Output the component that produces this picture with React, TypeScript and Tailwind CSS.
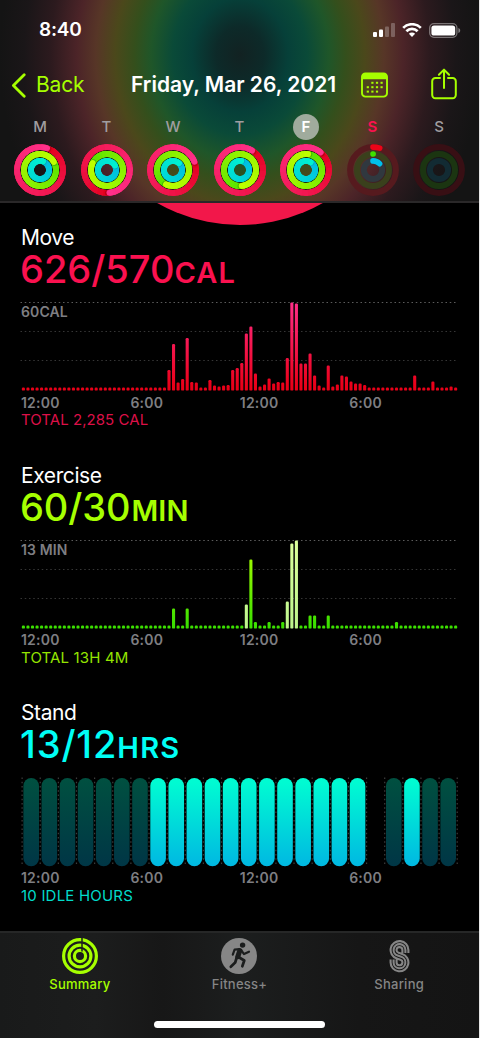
import type { ReactNode } from "react";

type RGB = [number, number, number];

const RING_COLORS: { from: RGB; to: RGB; radius: number }[] = [
  { from: [228, 0, 28], to: [255, 48, 138], radius: 22.9 },
  { from: [84, 226, 0], to: [190, 255, 0], radius: 16 },
  { from: [0, 184, 226], to: [0, 240, 208], radius: 9.1 },
];

const polar = (r: number, deg: number) => {
  const a = ((deg - 90) * Math.PI) / 180;
  return [26 + r * Math.cos(a), 26 + r * Math.sin(a)];
};

const arc = (r: number, start: number, end: number) => {
  const [x1, y1] = polar(r, start);
  const [x2, y2] = polar(r, end);
  return `M${x1} ${y1}A${r} ${r} 0 0 1 ${x2} ${y2}`;
};

const mix = (a: RGB, b: RGB, t: number) =>
  `rgb(${a.map((v, i) => Math.round(v + (b[i] - v) * t)).join(",")})`;

type Day = {
  label: string;
  // angle where each closed ring ends: move, exercise, stand
  ends?: number[];
  tracks?: string[];
  partial?: boolean;
};

const DAYS: Day[] = [
  { label: "M", ends: [18, 60, 20] },
  { label: "T", ends: [174, 296, 62] },
  { label: "W", ends: [69, 206, 42] },
  { label: "T", ends: [32, 174, 8] },
  { label: "F", ends: [40, 8, 32] },
  { label: "S", tracks: ["#561a1e", "#3a401c", "#30383f"], partial: true },
  { label: "S", tracks: ["#380f14", "#1b3511", "#122b33"] },
];

const Rings = ({ day }: { day: Day }) => (
  <svg width="52" height="52" viewBox="0 0 52 52" fill="none">
    {day.ends && <circle cx="26" cy="26" r="16" stroke="#101a10" strokeOpacity="0.85" strokeWidth="18" />}
    {day.tracks?.map((color, i) => (
      <circle key={color} cx="26" cy="26" r={RING_COLORS[i].radius} stroke={color} strokeWidth="6" />
    ))}
    {day.partial && (
      <g strokeWidth="5.6" strokeLinecap="round">
        <path d={arc(22.9, 0, 17)} stroke="#ec0418" />
        <path d={arc(16, 0, 0.5)} stroke="#3fe000" />
        <path d={arc(9.1, 0, 46)} stroke="#00c0ea" />
      </g>
    )}
    {day.ends?.map((end, i) => {
      const { from, to, radius } = RING_COLORS[i];
      const steps = 24;
      return (
        <g key={i} strokeWidth="5.9">
          <circle cx="26" cy="26" r={radius} stroke={mix(from, to, 0.5)} />
          {Array.from({ length: steps }, (_, s) => {
            const a = end - 360 + s * 15;
            const last = s === steps - 1;
            const t = Math.pow(s / steps, 0.75);
            return <path key={s} d={arc(radius, a, last ? a + 15 : a + 24)} stroke={mix(from, to, t)} />;
          })}
          <path d={arc(radius, end, end + 4)} stroke="#000" strokeOpacity="0.16" strokeLinecap="round" />
          <path d={arc(radius, end - 3, end)} stroke={mix(from, to, 1)} strokeLinecap="round" />
        </g>
      );
    })}
  </svg>
);

const StatusBar = () => (
  <div className="flex h-[30px] items-center justify-between pl-[39px] pr-[18px]">
    <span className="text-[19px] leading-[30px] font-semibold tracking-[-0.2px] text-white">8:40</span>
    <div className="flex items-center gap-[7px]">
      <svg width="22" height="14" viewBox="0 0 22 14" fill="#fff">
        <rect x="0" y="9" width="4" height="5" rx="1" />
        <rect x="6" y="6.4" width="4" height="7.6" rx="1" />
        <rect x="12" y="3.4" width="4" height="10.6" rx="1" opacity="0.25" />
        <rect x="18" y="0" width="4" height="14" rx="1" opacity="0.25" />
      </svg>
      <svg width="20" height="14" viewBox="0 0 20 14" fill="none" stroke="#fff" strokeWidth="2.7">
        <path d="M1.2 4.9a12.4 12.4 0 0 1 17.6 0" />
        <path d="M4.4 8.2a7.9 7.9 0 0 1 11.2 0" />
        <path d="M10 14L6.9 10.8a4.4 4.4 0 0 1 6.2 0z" fill="#fff" stroke="none" />
      </svg>
      <svg width="32" height="15" viewBox="0 0 32 15" fill="none">
        <rect x="0.7" y="0.7" width="27.2" height="13.6" rx="4.2" stroke="#fff" strokeOpacity="0.4" strokeWidth="1.3" />
        <rect x="2.4" y="2.4" width="23.8" height="10.2" rx="2.6" fill="#fff" />
        <path d="M29.4 5v5c1.3-.5 1.8-1.4 1.8-2.5s-.5-2-1.8-2.5z" fill="#fff" fillOpacity="0.45" />
      </svg>
    </div>
  </div>
);

const CALENDAR_DOTS = [
  [11, 10], [15.6, 10], [20.2, 10],
  [6.4, 14.4], [11, 14.4], [15.6, 14.4], [20.2, 14.4],
  [6.4, 18.8], [11, 18.8], [15.6, 18.8],
];

const NavBar = () => (
  <div className="mt-[23px] flex h-[34px] items-center pl-[11px] text-[#a6ff00]">
    <svg width="15" height="25" viewBox="0 0 15 25" fill="none" stroke="currentColor" strokeWidth="2.8" strokeLinecap="round" strokeLinejoin="round">
      <path d="M13.2 1.8L2.4 12.5l10.8 10.7" />
    </svg>
    <span className="ml-[10px] w-[95px] text-[21px] tracking-[-0.2px]">Back</span>
    <h1 className="w-[230px] text-[21px] font-semibold whitespace-nowrap text-white">Friday, Mar 26, 2021</h1>
    <svg width="27" height="26" viewBox="0 0 27 26" fill="none">
      <rect x="1" y="1.4" width="25" height="23.2" rx="3.4" stroke="currentColor" strokeWidth="1.9" />
      <path d="M1 7.2V4.4a3 3 0 0 1 3-3h19a3 3 0 0 1 3 3v2.8z" fill="currentColor" />
      {CALENDAR_DOTS.map(([x, y]) => (
        <rect key={`${x}-${y}`} x={x - 0.7} y={y - 0.2} width="2.2" height="2" fill="currentColor" />
      ))}
    </svg>
    <svg className="-mt-[2px] ml-[43px]" width="26" height="32" viewBox="0 0 26 32" fill="none" stroke="currentColor" strokeWidth="2" strokeLinecap="round" strokeLinejoin="round">
      <path d="M9 10H4.4A3.2 3.2 0 0 0 1.2 13.2v13.9a3.2 3.2 0 0 0 3.2 3.2h17.2a3.2 3.2 0 0 0 3.2-3.2V13.2A3.2 3.2 0 0 0 21.6 10H17" />
      <path d="M13 20V1.8M7.9 6.7L13 1.6l5.1 5.1" />
    </svg>
  </div>
);

const Week = () => (
  <div className="mt-[12px] ml-[6.75px] grid w-[465.5px] grid-cols-7">
    {DAYS.map((day, i) => (
      <div key={i} className="flex flex-col items-center">
        <span
          className={
            i === 4
              ? "flex size-[26px] items-center justify-center rounded-full bg-[#a0ab9d] text-[15px] font-semibold text-white"
              : i === 5
                ? "flex size-[26px] items-center justify-center text-[15px] font-semibold text-[#fa114f]"
                : "flex size-[26px] items-center justify-center text-[15px] font-medium text-[#a09da0]"
          }
        >
          {day.label}
        </span>
        <div className="mt-[4px]">
          <Rings day={day} />
        </div>
      </div>
    ))}
  </div>
);

const BASE = 90.6;
const PITCH = 4.55;
const barX = (i: number) => 23.4 + i * PITCH;

// quarter-hour slots that rise above the resting dot
const MOVE: Record<number, number> = {
  32: 20.5, 33: 46.5, 34: 8, 35: 11.5, 36: 52.5, 37: 8.5, 38: 8, 41: 10.5, 42: 5, 43: 4, 44: 5, 45: 5.5,
  46: 20.5, 47: 22.5, 48: 27.5, 49: 57, 50: 64, 51: 17, 52: 4, 53: 6, 54: 12, 55: 7, 56: 8.5, 57: 8,
  58: 32.5, 59: 88, 60: 87, 61: 27, 62: 27, 63: 37, 64: 15, 65: 5, 67: 25, 68: 4, 69: 6, 70: 15, 71: 14,
  72: 9, 73: 7, 74: 7, 75: 5.5, 86: 15, 90: 9, 94: 4,
};

const EXERCISE: Record<number, number> = {
  33: 20, 36: 20, 49: 24, 50: 69, 51: 6.5, 54: 6.5, 57: 6.5, 58: 27, 59: 85, 60: 88, 63: 13, 64: 13, 67: 13, 82: 6.5,
};
const WORKOUT = [49, 58, 59, 60];

type BarChartProps = { id: string; values: Record<number, number>; low: string; high: string; highlight?: number[] };

const BarChart = ({ id, values, low, high, highlight = [] }: BarChartProps) => (
  <svg className="block" width="479" height="92" viewBox="0 0 479 92">
    <defs>
      <linearGradient id={id} gradientUnits="userSpaceOnUse" x1="0" y1={BASE} x2="0" y2="2">
        <stop offset="0.05" stopColor={low} />
        <stop offset="1" stopColor={high} />
      </linearGradient>
      <linearGradient id={`${id}-hl`} gradientUnits="userSpaceOnUse" x1="0" y1={BASE} x2="0" y2="2">
        <stop offset="0" stopColor="#bdf58c" />
        <stop offset="1" stopColor="#dcff9c" />
      </linearGradient>
    </defs>
    {[2.5, 31.5, 60.5].map((y, i) => (
      <path key={y} d={`M20.5 ${y}H457`} stroke={i === 0 ? "#5c5c5c" : "#363636"} strokeWidth="1.1" strokeDasharray="1.5 2.75" />
    ))}
    {Array.from({ length: 96 }, (_, i) => {
      const h = values[i] ?? 3;
      const fill = highlight.includes(i) ? `url(#${id}-hl)` : `url(#${id})`;
      return <rect key={i} x={barX(i) - 1.55} y={BASE - h} width="3.1" height={h} rx="1.2" fill={fill} />;
    })}
  </svg>
);

const StandChart = () => (
  <svg className="block" width="479" height="92" viewBox="0 0 479 92">
    <defs>
      <linearGradient id="stand-on" x1="0" y1="0" x2="0" y2="1">
        <stop offset="0.05" stopColor="#00fbd2" />
        <stop offset="1" stopColor="#00b8e2" />
      </linearGradient>
      <linearGradient id="stand-off" x1="0" y1="0" x2="0" y2="1">
        <stop offset="0" stopColor="#005040" />
        <stop offset="1" stopColor="#003646" />
      </linearGradient>
    </defs>
    {Array.from({ length: 25 }, (_, i) => (
      <path key={i} d={`M${22.1 + i * 18.13} 2.5V90`} stroke="#3c3c3c" strokeWidth="1.2" strokeDasharray="1.5 2.75" />
    ))}
    {Array.from({ length: 24 }, (_, i) => {
      if (i === 19) return null;
      const on = (i > 6 && i < 19) || i === 21;
      return (
        <rect key={i} x={23.4 + i * 18.13} y="2.9" width="15.6" height="88.3" rx="7.8" fill={on ? "url(#stand-on)" : "url(#stand-off)"} />
      );
    })}
  </svg>
);

type SectionProps = {
  title: string;
  value: ReactNode;
  color: string;
  scale?: string;
  total: ReactNode;
  children: ReactNode;
};

const Section = ({ title, value, color, scale, total, children }: SectionProps) => (
  <section className="h-[237.7px]">
    <h2 className="pl-[21px] text-[21px] leading-6 tracking-[-0.4px] text-white">{title}</h2>
    <div className={`h-[38px] pl-[20px] leading-[38px] whitespace-nowrap ${color}`}>{value}</div>
    <div className="relative mt-[12px]">
      {children}
      {scale && (
        <span className="absolute top-[4px] left-[21px] text-[14px] leading-4 font-semibold tracking-[0.1px] text-[#7e7e82]">{scale}</span>
      )}
    </div>
    <div className="mt-[2.5px] ml-[21px] grid w-[437.6px] grid-cols-4 text-[14px] leading-4 font-semibold tracking-[0.2px] text-[#7e7e82]">
      <span>12:00</span>
      <span>6:00</span>
      <span>12:00</span>
      <span>6:00</span>
    </div>
    <div className="mt-[0.8px] pl-[21px] text-[15px] leading-[18px]">{total}</div>
  </section>
);

// three parallel strands that swap radius between the upper and lower loop
const strand = (r: number) => {
  const q = 11.8 - r;
  const nx = -0.309;
  const ny = 0.951;
  const c = 10.5;
  const top = 10;
  const bottom = 22.4;
  return `M${c + r} ${top + 3}V${top}A${r} ${r} 0 1 0 ${c + r * nx} ${top + r * ny}L${c - q * nx} ${bottom - q * ny}A${q} ${q} 0 1 1 ${c - q} ${bottom}V${bottom - 3}`;
};

const TabBar = () => (
  <nav className="h-[107px] border-t-2 border-[#262727] bg-[linear-gradient(90deg,#191a1a_0%,#1c1d1d_20%,#171717_34%,#1c1e1e_50%,#161616_75%,#141414_100%)]">
    <div className="grid grid-cols-3 text-[13px] leading-4 font-medium tracking-[0.25px] text-[#858585]">
      <div className="flex flex-col items-center pt-[5px] text-[#a6ff00]">
        <svg width="36" height="36" viewBox="0 0 36 36" fill="none" stroke="currentColor" strokeWidth="3.2">
          <circle cx="18" cy="18" r="16.4" />
          <circle cx="18" cy="18" r="10.9" />
          <circle cx="18" cy="18" r="5.6" />
          <path d="M20 0V13.5" stroke="#1b1c1c" strokeWidth="1.5" />
        </svg>
        <span className="mt-[2px]">Summary</span>
      </div>
      <div className="flex flex-col items-center pt-[5px]">
        <svg width="36" height="36" viewBox="0 0 36 36" fill="none" stroke="#1b1d1d" strokeLinecap="round" strokeLinejoin="round">
          <circle cx="18" cy="18" r="18" fill="#868686" stroke="none" />
          <circle cx="21.6" cy="7.1" r="2.7" fill="#1b1d1d" stroke="none" />
          <path d="M18.8 12.6L16.8 18.6" strokeWidth="5" />
          <path d="M18.5 11.2L13.6 11.7L11.8 16.6" strokeWidth="2.2" />
          <path d="M20.2 12.2L23 16.1L28 13.7" strokeWidth="2.2" />
          <path d="M17.4 19L23.3 22.5L21.3 28.3" strokeWidth="2.7" />
          <path d="M15.7 19.5L14.2 24.5L9.8 28.7" strokeWidth="2.7" />
        </svg>
        <span className="mt-[2px]">Fitness+</span>
      </div>
      <div className="flex flex-col items-center pt-[7px]">
        <svg width="21" height="33" viewBox="0 0 21 33" fill="none" stroke="currentColor" strokeWidth="2.1">
          <path d={strand(2.9)} />
          <path d={strand(5.9)} />
          <path d={strand(8.9)} />
        </svg>
        <span className="mt-[3px]">Sharing</span>
      </div>
    </div>
    <div className="mx-auto mt-[29px] h-[7px] w-[171px] rounded-full bg-white" />
  </nav>
);

export default function App() {
  return (
    <div className="h-[1038px] w-[480px] overflow-hidden bg-[#e6e6e6]">
      <div className="flex h-full w-[479px] flex-col bg-black font-['Inter',sans-serif]">
        <header className="h-[203px] shrink-0 border-b-2 border-[#2a2829] bg-[radial-gradient(ellipse_240px_285px_at_240px_55px,#122222_0%,#0d2a29_10%,#064039_20%,#0a4a38_28%,#1f5629_37%,#344f1c_44%,#4b481b_52%,#573627_60%,#4c2428_68%,#2c1a1e_79%,#1a1618_90%,#141414_100%)] pt-[15px]">
          <StatusBar />
          <NavBar />
          <Week />
        </header>

        {/* lower edge of the large activity ring scrolled under the header */}
        <div className="flex h-[23px] shrink-0 items-end justify-center overflow-hidden">
          <div className="mb-[1px] size-[334px] shrink-0 rounded-full bg-[#f2174a]" />
        </div>

        <main className="h-[705px] shrink-0">
          <Section
            title="Move"
            scale="60CAL"
            color="text-[#fa114f]"
            value={
              <>
                <span className="text-[38px] font-medium">626/570</span>
                <span className="text-[29px] font-semibold tracking-[1.2px]">CAL</span>
              </>
            }
            total={<p className="tracking-[0.05px] text-[#dc1048]">TOTAL 2,285 CAL</p>}
          >
            <BarChart id="move" values={MOVE} low="#ea0018" high="#ff2e88" />
          </Section>
          <Section
            title="Exercise"
            scale="13 MIN"
            color="text-[#a6ff00]"
            value={
              <>
                <span className="text-[38px] font-medium tracking-[-0.1px]">60/30</span>
                <span className="ml-[1px] text-[29px] font-semibold tracking-[0.2px]">MIN</span>
              </>
            }
            total={<p className="tracking-[0.15px] text-[#94e400]">TOTAL 13H 4M</p>}
          >
            <BarChart id="exercise" values={EXERCISE} low="#3ce000" high="#b4ff00" highlight={WORKOUT} />
          </Section>
          <Section
            title="Stand"
            color="text-[#00fff6]"
            value={
              <>
                <span className="text-[38px] font-medium tracking-[0.9px]">13/12</span>
                <span className="text-[29px] font-semibold tracking-[1.2px]">HRS</span>
              </>
            }
            total={<p className="tracking-[0.2px] text-[#00dccb]">10 IDLE HOURS</p>}
          >
            <StandChart />
          </Section>
        </main>

        <TabBar />
      </div>
    </div>
  );
}
